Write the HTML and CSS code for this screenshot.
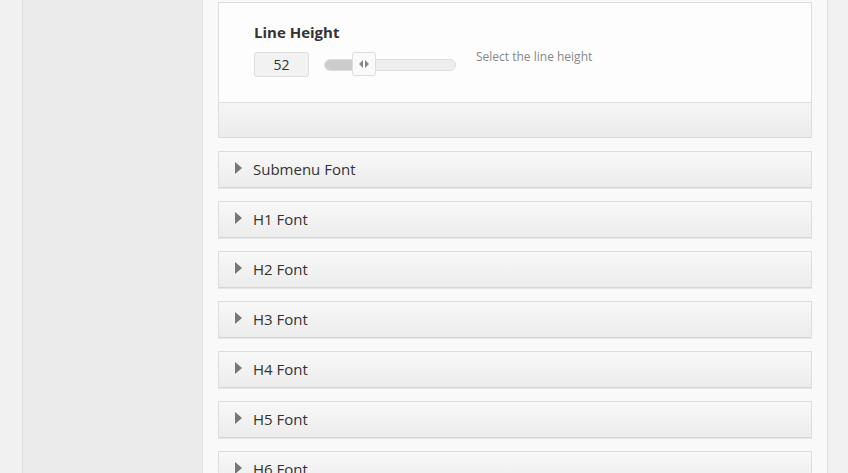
FILE: index.html
```html
<!DOCTYPE html>
<html>
<head>
<meta charset="utf-8">
<link rel="stylesheet" href="styles.css">
</head>
<body>
<div class="page">
  <div class="gutter-left"></div>
  <aside class="sidebar"></aside>
  <main class="main">
    <section class="panel">
      <div class="panel-body">
        <h3 class="field-title">Line Height</h3>
        <div class="field-row">
          <div class="num-input">52</div>
          <div class="slider">
            <div class="slider-fill" style="width:28px"></div>
            <div class="slider-handle">
              <svg width="10" height="8" viewBox="0 0 10 8"><path d="M4 0 L0 4 L4 8 Z M6 0 L10 4 L6 8 Z" fill="#888"/></svg>
            </div>
          </div>
          <span class="desc">Select the line height</span>
        </div>
      </div>
      <div class="panel-footer"></div>
    </section>
    <div class="acc"><span class="caret"></span><span class="acc-label">Submenu Font</span></div>
    <div class="acc"><span class="caret"></span><span class="acc-label">H1 Font</span></div>
    <div class="acc"><span class="caret"></span><span class="acc-label">H2 Font</span></div>
    <div class="acc"><span class="caret"></span><span class="acc-label">H3 Font</span></div>
    <div class="acc"><span class="caret"></span><span class="acc-label">H4 Font</span></div>
    <div class="acc"><span class="caret"></span><span class="acc-label">H5 Font</span></div>
    <div class="acc"><span class="caret"></span><span class="acc-label">H6 Font</span></div>
  </main>
  <div class="gutter-right"></div>
</div>
</body>
</html>
```
FILE: styles.css
```css
html, body {
  margin: 0;
  padding: 0;
  height: 473px;
  overflow: hidden;
  background: #f1f1f1;
  font-family: "Open Sans", "Liberation Sans", sans-serif;
  color: #333;
}
.page {
  display: flex;
  height: 473px;
}
.gutter-left {
  width: 22px;
  flex: none;
}
.sidebar {
  width: 179px;
  flex: none;
  background: #ebebeb;
  border-left: 1px solid #dcdcdc;
  border-right: 1px solid #e2e2e2;
}
.main {
  width: 594px;
  flex: none;
  background: #f9f9f9;
  border-right: 1px solid #dedede;
  padding: 2px 15px 0 15px;
  display: flex;
  flex-direction: column;
  overflow: hidden;
}
.gutter-right {
  flex: 1;
}
.panel {
  border: 1px solid #dddddd;
  border-bottom-color: #d8d8d8;
  flex: none;
}
.panel-body {
  height: 100px;
  box-sizing: border-box;
  background: #fdfdfd;
  border-bottom: 1px solid #e0e0e0;
  padding: 18px 0 0 35px;
}
.field-title {
  margin: 0;
  font-size: 15px;
  font-weight: 700;
  line-height: 22px;
  color: #333;
}
.field-row {
  display: flex;
  align-items: center;
  margin-top: 9px;
}
.num-input {
  width: 53px;
  height: 23px;
  border: 1px solid #dddddd;
  border-radius: 3px;
  background: #f2f2f2;
  font-size: 14px;
  line-height: 23px;
  text-align: center;
  color: #333;
}
.slider {
  position: relative;
  margin-left: 15px;
  width: 130px;
  height: 10px;
  border: 1px solid #dedede;
  border-radius: 6px;
  background: #eeeeee;
}
.slider-fill {
  height: 100%;
  background: #cccccc;
  border-radius: 6px 0 0 6px;
}
.slider-handle {
  position: absolute;
  left: 27px;
  top: -8px;
  width: 22px;
  height: 22px;
  border: 1px solid #dddddd;
  border-radius: 3px;
  background: #fafafa;
  display: flex;
  align-items: center;
  justify-content: center;
}
.desc {
  margin-left: 20px;
  font-size: 12px;
  color: #888;
  position: relative;
  top: -8px;
}
.panel-footer {
  height: 34px;
  background: linear-gradient(#f5f5f5, #ececec);
}
.acc {
  flex: none;
  margin-top: 13px;
  height: 33px;
  padding-bottom: 2px;
  border: 1px solid #dddddd;
  border-bottom-color: #d6d6d6;
  box-shadow: 0 1px 0 #e6e6e6;
  background: linear-gradient(#f8f8f8, #ececec);
  display: flex;
  align-items: center;
  padding-left: 16px;
  box-sizing: content-box;
}
.caret {
  width: 0;
  height: 0;
  border-top: 6px solid transparent;
  border-bottom: 6px solid transparent;
  border-left: 7px solid #777;
  margin-right: 11px;
  margin-top: -1px;
}
.acc-label {
  font-size: 15px;
  color: #333;
}
```
